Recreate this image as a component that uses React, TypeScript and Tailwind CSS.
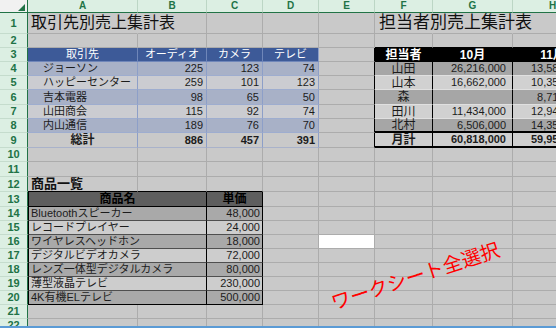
import React from "react";
import clsx from "clsx";

const SHEET = "bg-[#c9c9c9]";
const GR = "border-r-[#acacac]";
const GB = "border-b-[#acacac]";

// table palettes
const T1H = "bg-[#3d5a98]";
const T1D = "bg-[#a8b1c7]";
const T1L = "bg-[#cbccd1]";
const T1R = "border-r-[#8d9fc8]";
const T1B = "border-b-[#9eadcf]";
const T2D = "bg-[#a6a6a6]";
const T2L = "bg-[#d1d1d1]";
const T3D = "bg-[#a9a9a9]";
const T3L = "bg-[#cdcdcd]";

const W = {
  A: "w-[110px]",
  B: "w-[69px]",
  C: "w-[56px]",
  D: "w-[56px]",
  E: "w-[56px]",
  F: "w-[58px]",
  G: "w-[80px]",
  H: "w-[80px]",
  AB: "w-[179px]",
};

type CellProps = {
  w: string;
  bg?: string;
  r?: string;
  b?: string;
  bw?: string;
  className?: string;
  children?: React.ReactNode;
};

function Cell({ w, bg = SHEET, r = GR, b = GB, bw = "border-b", className, children }: CellProps) {
  return (
    <div
      className={clsx(
        "flex h-full shrink-0 items-center whitespace-nowrap border-r leading-none",
        bw,
        w,
        bg,
        r,
        b,
        className
      )}
    >
      {children}
    </div>
  );
}

function Row({ n, h, children }: { n: number; h: string; children: React.ReactNode }) {
  return (
    <div className={clsx("flex", h)}>
      <div className="flex h-full w-[28px] shrink-0 items-center justify-center border-r border-b border-r-[#217346] border-b-[#c5dccd] bg-[#dcefe3] text-[11px] font-bold text-[#217346]">
        {n}
      </div>
      {children}
    </div>
  );
}

function Blank({ cols }: { cols: (keyof typeof W)[] }) {
  return (
    <>
      {cols.map((c) => (
        <Cell key={c} w={W[c]} />
      ))}
    </>
  );
}

const clients = [
  { name: "ジョーソン", v: ["225", "123", "74"] },
  { name: "ハッピーセンター", v: ["259", "101", "123"] },
  { name: "吉本電器", v: ["98", "65", "50"] },
  { name: "山田商会", v: ["115", "92", "74"] },
  { name: "内山通信", v: ["189", "76", "70"] },
];

const staff = [
  { name: "山田", oct: "26,216,000", nov: "13,580,000" },
  { name: "山本", oct: "16,662,000", nov: "10,350,000" },
  { name: "森", oct: "", nov: "8,710,000" },
  { name: "田川", oct: "11,434,000", nov: "12,940,000" },
  { name: "北村", oct: "6,506,000", nov: "14,350,000" },
];

const products = [
  { name: "Bluetoothスピーカー", price: "48,000" },
  { name: "レコードプレイヤー", price: "24,000" },
  { name: "ワイヤレスヘッドホン", price: "18,000" },
  { name: "デジタルビデオカメラ", price: "72,000" },
  { name: "レンズ一体型デジタルカメラ", price: "80,000" },
  { name: "薄型液晶テレビ", price: "230,000" },
  { name: "4K有機ELテレビ", price: "500,000" },
];

const dataH = ["h-[14px]", "h-[14px]", "h-[15px]", "h-[14px]", "h-[14px]"];
const prodH = ["h-[14px]", "h-[14px]", "h-[14px]", "h-[14px]", "h-[14px]", "h-[14px]", "h-[14px]"];

export default function App() {
  return (
    <div className="relative h-[328px] w-[556px] overflow-hidden bg-[#c9c9c9] font-['Liberation_Sans','Noto_Sans_CJK_JP',sans-serif] text-[11px] text-[#1c1c1c]">
      <div className="h-[326px] overflow-hidden">
        {/* column headers */}
        <div className="flex h-[13px]">
          <div className="flex h-full w-[28px] shrink-0 items-end justify-end border-r border-b border-r-[#217346] border-b-[#217346] bg-[#f1f1f1] pr-[2px] pb-[1px]">
            <svg width="7" height="7" viewBox="0 0 7 7">
              <polygon points="7,0 7,7 0,7" fill="#217346" />
            </svg>
          </div>
          {(["A", "B", "C", "D", "E", "F", "G", "H"] as const).map((c) => (
            <div
              key={c}
              className={clsx(
                "flex h-full shrink-0 items-center justify-center border-r border-b border-r-[#bcd6c5] border-b-[#217346] bg-[#dcefe3] text-[10px] font-bold leading-none text-[#217346]",
                W[c]
              )}
            >
              {c}
            </div>
          ))}
        </div>

        {/* row 1: titles */}
        <Row n={1} h="h-[21px]">
          <Cell w={W.A} r="border-r-[#c9c9c9]" className="relative z-10 items-end pb-[2px] pl-[3px] text-[16px] text-[#111]">
            取引先別売上集計表
          </Cell>
          <Blank cols={["B", "C", "D", "E"]} />
          <Cell w={W.F} r="border-r-[#c9c9c9]" className="relative z-10 items-end pb-[2px] pl-[4px] text-[17px] text-[#111]">
            担当者別売上集計表
          </Cell>
          <Cell w={W.G} r="border-r-[#c9c9c9]" />
          <Cell w={W.H} />
        </Row>

        {/* row 2 */}
        <Row n={2} h="h-[14px]">
          <Blank cols={["A", "B", "C", "D", "E"]} />
          <Cell w={W.F} b="border-b-black" />
          <Cell w={W.G} b="border-b-black" />
          <Cell w={W.H} b="border-b-black" />
        </Row>

        {/* row 3: table headers */}
        <Row n={3} h="h-[14px]">
          <Cell w={W.A} bg={T1H} r="border-r-[#6f86b9]" b="border-b-[#6f86b9]" className="justify-center text-white">
            取引先
          </Cell>
          <Cell w={W.B} bg={T1H} r="border-r-[#6f86b9]" b="border-b-[#6f86b9]" className="justify-center text-white">
            オーディオ
          </Cell>
          <Cell w={W.C} bg={T1H} r="border-r-[#6f86b9]" b="border-b-[#6f86b9]" className="justify-center text-white">
            カメラ
          </Cell>
          <Cell w={W.D} bg={T1H} r={T1R} b="border-b-[#6f86b9]" className="justify-center text-white">
            テレビ
          </Cell>
          <Cell w={W.E} r="border-r-black" />
          <Cell w={W.F} bg="bg-black" r="border-r-black" b="border-b-black" className="justify-center text-[12px] font-bold text-white">
            担当者
          </Cell>
          <Cell w={W.G} bg="bg-black" r="border-r-black" b="border-b-black" className="justify-center text-[12px] font-bold text-white">
            10月
          </Cell>
          <Cell w={W.H} bg="bg-black" r="border-r-black" b="border-b-black" className="justify-center text-[12px] font-bold text-white">
            11月
          </Cell>
        </Row>

        {/* rows 4-8 */}
        {clients.map((c, i) => {
          const t1 = i % 2 === 0 ? T1D : T1L;
          const t2 = i % 2 === 0 ? T2D : T2L;
          const s = staff[i];
          const last = i === 4;
          const b2 = last ? "border-b-black" : "border-b-[#e0e0e0]";
          const bw2 = last ? "border-b-2" : "border-b";
          return (
            <Row key={c.name} n={i + 4} h={dataH[i]}>
              <Cell w={W.A} bg={t1} r={T1R} b={T1B} className="pl-[15px]">
                {c.name}
              </Cell>
              <Cell w={W.B} bg={t1} r={T1R} b={T1B} className="justify-end pr-[3px]">
                {c.v[0]}
              </Cell>
              <Cell w={W.C} bg={t1} r={T1R} b={T1B} className="justify-end pr-[3px]">
                {c.v[1]}
              </Cell>
              <Cell w={W.D} bg={t1} r={T1R} b={T1B} className="justify-end pr-[3px]">
                {c.v[2]}
              </Cell>
              <Cell w={W.E} r="border-r-black" />
              <Cell w={W.F} bg={t2} r="border-r-black" b={b2} bw={bw2} className="justify-center text-[12px]">
                {s.name}
              </Cell>
              <Cell w={W.G} bg={t2} r="border-r-black" b={b2} bw={bw2} className="justify-end pr-[6px]">
                {s.oct}
              </Cell>
              <Cell w={W.H} bg={t2} r="border-r-black" b={b2} bw={bw2} className="justify-end pr-[6px]">
                {s.nov}
              </Cell>
            </Row>
          );
        })}

        {/* row 9: totals */}
        <Row n={9} h="h-[15px]">
          <Cell w={W.A} r={T1R} b="border-b-[#a9b2ca]" className="justify-center text-[12px] font-bold">
            総計
          </Cell>
          <Cell w={W.B} r={T1R} b="border-b-[#a9b2ca]" className="justify-end pr-[3px] font-bold">
            886
          </Cell>
          <Cell w={W.C} r={T1R} b="border-b-[#a9b2ca]" className="justify-end pr-[3px] font-bold">
            457
          </Cell>
          <Cell w={W.D} r={T1R} b="border-b-[#a9b2ca]" className="justify-end pr-[3px] font-bold">
            391
          </Cell>
          <Cell w={W.E} r="border-r-black" />
          <Cell w={W.F} bg="bg-[#cfcfcf]" r="border-r-black" b="border-b-black" bw="border-b-2" className="justify-center text-[12px] font-bold">
            月計
          </Cell>
          <Cell w={W.G} bg="bg-[#cfcfcf]" r="border-r-black" b="border-b-black" bw="border-b-2" className="justify-end pr-[6px] font-bold">
            60,818,000
          </Cell>
          <Cell w={W.H} bg="bg-[#cfcfcf]" r="border-r-black" b="border-b-black" bw="border-b-2" className="justify-end pr-[6px] font-bold">
            59,958,000
          </Cell>
        </Row>

        <Row n={10} h="h-[14px]">
          <Blank cols={["A", "B", "C", "D", "E", "F", "G", "H"]} />
        </Row>
        <Row n={11} h="h-[15px]">
          <Blank cols={["A", "B", "C", "D", "E", "F", "G", "H"]} />
        </Row>

        {/* row 12: product list title */}
        <Row n={12} h="h-[15px]">
          <Cell w={W.A} b="border-b-black" className="items-end pb-[1px] pl-[3px] text-[13px] font-bold text-[#111]">
            商品一覧
          </Cell>
          <Cell w={W.B} b="border-b-black" />
          <Cell w={W.C} b="border-b-black" />
          <Blank cols={["D", "E", "F", "G", "H"]} />
        </Row>

        {/* row 13: product table header */}
        <Row n={13} h="h-[15px]">
          <Cell w={W.AB} bg="bg-[#5e5e5e]" r="border-r-black" b="border-b-black" className="justify-center border-l border-l-black text-[12px] font-bold text-black">
            商品名
          </Cell>
          <Cell w={W.C} bg="bg-[#5e5e5e]" r="border-r-black" b="border-b-black" className="justify-center text-[12px] font-bold text-black">
            単価
          </Cell>
          <Blank cols={["D", "E", "F", "G", "H"]} />
        </Row>

        {/* rows 14-20 */}
        {products.map((p, i) => {
          const bg = i % 2 === 0 ? T3D : T3L;
          const b = i === 6 ? "border-b-black" : "border-b-[#4f4f4f]";
          return (
            <Row key={p.name} n={i + 14} h={prodH[i]}>
              <Cell w={W.AB} bg={bg} r="border-r-black" b={b} className="border-l border-l-black pl-[2px]">
                {p.name}
              </Cell>
              <Cell w={W.C} bg={bg} r="border-r-black" b={b} className="justify-end pr-[2px]">
                {p.price}
              </Cell>
              <Cell w={W.D} />
              <Cell w={W.E} bg={i === 2 ? "bg-white" : SHEET} />
              <Blank cols={["F", "G", "H"]} />
            </Row>
          );
        })}

        <Row n={21} h="h-[14px]">
          <Blank cols={["A", "B", "C", "D", "E", "F", "G", "H"]} />
        </Row>
        <Row n={22} h="h-[14px]">
          <Blank cols={["A", "B", "C", "D", "E", "F", "G", "H"]} />
        </Row>
      </div>
      <div className="h-[2px] bg-[#5b9bd5]" />

      {/* annotation */}
      <div className="absolute left-[415px] top-[275px] -translate-x-1/2 -translate-y-1/2 rotate-[-18deg] whitespace-nowrap font-['Noto_Sans_CJK_JP',sans-serif] text-[19.5px] leading-none text-[#ff0000]">
        ワークシート全選択
      </div>
    </div>
  );
}
